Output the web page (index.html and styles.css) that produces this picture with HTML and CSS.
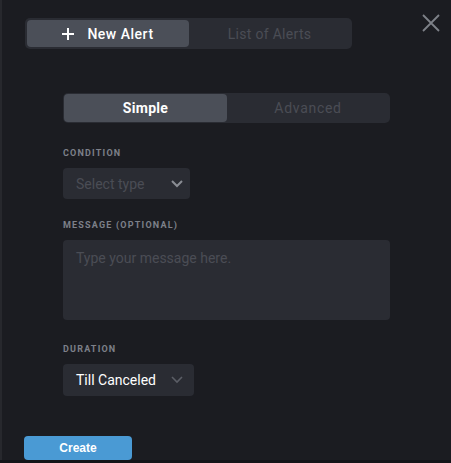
FILE: index.html
```html
<!DOCTYPE html>
<html lang="en">
<head>
    <meta charset="UTF-8">
    <meta name="viewport" content="width=device-width, initial-scale=1.0">
    <title>New Alert</title>
    <link rel="stylesheet" href="styles.css">
</head>
<body>
    <div class="panel">
        <header class="panel-head">
            <div class="tabs">
                <button class="tab active">
                    <svg class="plus" width="12" height="12" viewBox="0 0 12 12"><path d="M6 0v12M0 6h12" stroke="#fff" stroke-width="2"/></svg>
                    New Alert
                </button>
                <button class="tab">List of Alerts</button>
            </div>
            <button class="close" aria-label="Close">
                <svg width="18" height="18" viewBox="0 0 18 18"><path d="M1 1l16 16M17 1L1 17" stroke="#7e8188" stroke-width="1.8"/></svg>
            </button>
        </header>

        <form class="alert-form">
            <div class="toggle">
                <button type="button" class="toggle-btn active">Simple</button>
                <button type="button" class="toggle-btn">Advanced</button>
            </div>

            <label class="field-label">Condition</label>
            <div class="select select-type">
                <span class="placeholder">Select type</span>
                <svg width="12" height="8" viewBox="0 0 12 8"><path d="M1 1l5 5 5-5" fill="none" stroke="#8a8d94" stroke-width="2"/></svg>
            </div>

            <label class="field-label">Message (optional)</label>
            <div class="textarea"><span class="placeholder">Type your message here.</span></div>

            <label class="field-label">Duration</label>
            <div class="select select-duration">
                <span class="value">Till Canceled</span>
                <svg width="12" height="8" viewBox="0 0 12 8"><path d="M1 1l5 5 5-5" fill="none" stroke="#5b5e66" stroke-width="1.6"/></svg>
            </div>
        </form>

        <footer class="panel-foot">
            <button class="create">Create</button>
        </footer>
    </div>
</body>
</html>
```

FILE: styles.css
```css
* {
    margin: 0;
    padding: 0;
    box-sizing: border-box;
}

body {
    font-family: Roboto, "Liberation Sans", Arial, sans-serif;
    background-color: #131418;
    width: 451px;
    height: 463px;
    overflow: hidden;
}

button {
    font-family: inherit;
    border: none;
    background: none;
    cursor: pointer;
}

/* Panel */
.panel {
    height: 460px;
    background-color: #1b1c21;
    border-left: 2px solid #27282d;
    display: flex;
    flex-direction: column;
}

.panel-head {
    display: flex;
    align-items: flex-start;
    padding: 18px 11px 0 23px;
}

.tabs {
    display: flex;
    width: 327px;
    height: 31px;
    padding: 2px;
    background-color: #2a2c33;
    border-radius: 5px;
}

.tab {
    flex: 1;
    display: flex;
    align-items: center;
    justify-content: center;
    gap: 13px;
    font-size: 14px;
    color: #4a4d55;
    border-radius: 4px;
    letter-spacing: 0.3px;
}

.tab.active {
    flex: 0 0 162px;
    background-color: #4b4f58;
    color: #fff;
    font-weight: 500;
    letter-spacing: 0.5px;
}

.close {
    margin-left: auto;
    margin-top: -4px;
    width: 18px;
    height: 18px;
}

/* Form */
.alert-form {
    padding: 44px 0 0 61px;
    display: flex;
    flex-direction: column;
    align-items: flex-start;
}

.toggle {
    display: flex;
    width: 327px;
    height: 30px;
    padding: 1px;
    background-color: #2a2c33;
    border-radius: 5px;
}

.toggle-btn {
    flex: 1;
    font-size: 14px;
    color: #4a4d55;
    border-radius: 4px;
    letter-spacing: 0.7px;
}

.toggle-btn.active {
    flex: 0 0 163px;
    background-color: #4b4f58;
    color: #fff;
    font-weight: 700;
    letter-spacing: 0.3px;
}

.field-label {
    display: block;
    margin-top: 24px;
    margin-bottom: 9px;
    font-size: 9px;
    line-height: 12px;
    font-weight: 700;
    letter-spacing: 1.2px;
    text-transform: uppercase;
    color: #7d8089;
}

.select {
    display: flex;
    align-items: center;
    justify-content: space-between;
    height: 31px;
    padding: 0 7px 0 13px;
    background-color: #2a2c33;
    border-radius: 4px;
    font-size: 14px;
}

.select-type {
    width: 127px;
}

.select-duration {
    width: 131px;
    height: 32px;
    padding-right: 11px;
}

.placeholder {
    color: #4a4d55;
    font-size: 14px;
}

.value {
    color: #fff;
}

.textarea {
    width: 327px;
    height: 80px;
    padding: 8px 13px;
    background-color: #2a2c33;
    border-radius: 4px;
}

.alert-form .field-label:nth-of-type(2) {
    margin-top: 20px;
}

.alert-form .field-label:nth-of-type(3) {
    margin-top: 23px;
}

/* Footer */
.panel-foot {
    margin-top: auto;
    padding-left: 22px;
}

.create {
    width: 108px;
    height: 24px;
    background-color: #4a9ad4;
    color: #fff;
    font-family: "Liberation Sans", Arial, sans-serif;
    font-size: 12px;
    font-weight: 700;
    border-radius: 4px;
}
```
